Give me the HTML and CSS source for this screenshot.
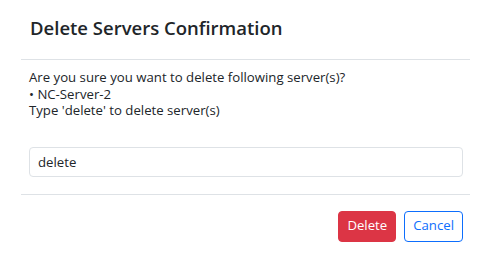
FILE: index.html
```html
<!DOCTYPE html>
<html lang="en">
<head>
<meta charset="utf-8">
<title>Delete Servers Confirmation</title>
<link rel="stylesheet" href="styles.css">
</head>
<body>
<div class="modal">
  <div class="modal-header">
    <h5 class="modal-title">Delete Servers Confirmation</h5>
  </div>
  <div class="modal-body">
    <p class="line">Are you sure you want to delete following server(s)?</p>
    <p class="line">• NC-Server-2</p>
    <p class="line">Type 'delete' to delete server(s)</p>
    <input class="form-control" type="text" value="delete">
  </div>
  <div class="modal-footer">
    <button class="btn btn-danger" type="button">Delete</button>
    <button class="btn btn-outline-primary" type="button">Cancel</button>
  </div>
</div>
</body>
</html>
```

FILE: styles.css
```css
html, body {
  margin: 0;
  padding: 0;
  background: #ffffff;
}

body {
  font-family: "Open Sans", "Noto Sans", "Liberation Sans", sans-serif;
  color: #212529;
}

.modal {
  padding: 0 21px;
}

.modal-header {
  padding: 16px 9px 19px;
  border-bottom: 1px solid #dee2e6;
}

.modal-title {
  margin: 0;
  font-size: 18.5px;
  font-weight: 600;
  line-height: 24px;
  color: #212529;
}

.modal-body {
  padding: 9px 7px 17px 8px;
}

.line {
  margin: 0;
  font-size: 13.2px;
  line-height: 16.5px;
}

.form-control {
  display: block;
  box-sizing: border-box;
  width: 100%;
  height: 30px;
  margin: 28px 0 0;
  padding: 0 8px;
  border: 1px solid #dee2e6;
  border-radius: 4px;
  font-family: inherit;
  font-size: 13.2px;
  color: #212529;
  background: #ffffff;
  outline: none;
}

.modal-footer {
  display: flex;
  justify-content: flex-end;
  gap: 8px;
  padding: 16px 7px 21px 8px;
  border-top: 1px solid #dee2e6;
}

.btn {
  box-sizing: border-box;
  height: 31px;
  padding: 0 8px;
  border: 1px solid transparent;
  border-radius: 4px;
  font-family: inherit;
  font-size: 13.2px;
  line-height: 1;
  cursor: pointer;
}

.btn-danger {
  background: #dc3545;
  border-color: #dc3545;
  color: #ffffff;
}

.btn-outline-primary {
  background: #ffffff;
  border-color: #0d6efd;
  color: #0d6efd;
}
```
